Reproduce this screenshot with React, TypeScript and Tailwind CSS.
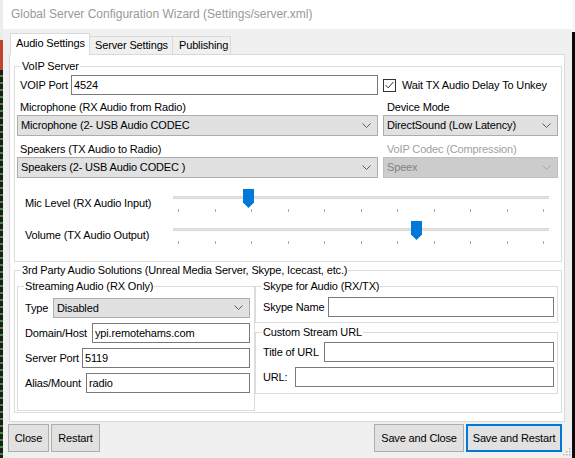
import React from "react";

function Chevron({ disabled = false }: { disabled?: boolean }) {
  return (
    <svg width="9" height="6" viewBox="0 0 9 6" className="shrink-0">
      <polyline
        points="0.5,0.5 4.5,4.5 8.5,0.5"
        fill="none"
        stroke={disabled ? "#a6a6a6" : "#5c5c5c"}
        strokeWidth="1"
      />
    </svg>
  );
}

function Select({
  value,
  className = "",
  disabled = false,
}: {
  value: string;
  className?: string;
  disabled?: boolean;
}) {
  const tone = disabled
    ? "border-[#bfbfbf] bg-[#cccccc] text-[#838383]"
    : "border-[#adadad] bg-[#e1e1e1] text-black";
  return (
    <div
      className={`flex items-center justify-between border pl-[3px] pr-[6px] whitespace-nowrap ${tone} ${className}`}
    >
      <span>{value}</span>
      <Chevron disabled={disabled} />
    </div>
  );
}

function Field({ value = "", className = "" }: { value?: string; className?: string }) {
  return (
    <input
      readOnly
      value={value}
      className={`h-[20px] border border-[#7a7a7a] bg-white px-[2px] text-[11px] tracking-[-0.15px] text-black outline-none ${className}`}
    />
  );
}

function Group({
  title,
  className = "",
  children,
}: {
  title: string;
  className?: string;
  children: React.ReactNode;
}) {
  return (
    <fieldset className={`border border-[#dcdcdc] ${className}`}>
      <legend className="ml-[6px] px-[1px] leading-[13px] whitespace-nowrap">{title}</legend>
      {children}
    </fieldset>
  );
}

// trackbar with 11 ticks, thumb placed by pixel offset
function Slider({ label, thumbLeft }: { label: string; thumbLeft: number }) {
  return (
    <div className="flex">
      <div className="flex h-[24px] w-[158px] items-center pl-[10px] pt-[4px] whitespace-nowrap">
        {label}
      </div>
      <div className="relative h-[24px] w-[376px]">
        <div className="mt-[7px] h-[3px] border-y border-[#d6d6d6] bg-[#e7eaea]" />
        <div className="mt-[10px] flex justify-between px-[5px]">
          {Array.from({ length: 11 }).map((_, i) => (
            <div key={i} className="h-[3px] w-px bg-[#a8a8a8]" />
          ))}
        </div>
        <svg
          width="11"
          height="19"
          viewBox="0 0 11 19"
          className="absolute top-0"
          style={{ left: thumbLeft }}
        >
          <path d="M0 0 H11 V13.5 L5.5 19 L0 13.5 Z" fill="#0078d7" />
        </svg>
      </div>
    </div>
  );
}

function Button({ label, className = "" }: { label: string; className?: string }) {
  return (
    <div
      className={`flex h-[28px] items-center justify-center bg-[#e1e1e1] whitespace-nowrap ${className}`}
    >
      {label}
    </div>
  );
}

export default function App() {
  return (
    <div className="flex h-[458px] w-[575px] overflow-hidden bg-[#f0f0f0] font-['Liberation_Sans',Arial,sans-serif] text-[11px] leading-[13px] tracking-[-0.15px] text-black">
      {/* desktop edge on the left */}
      <div className="flex w-[3px] flex-col">
        <div className="h-[40px] bg-[#ececec]" />
        <div className="h-[30px] bg-[#c0442c]" />
        <div className="flex-1 bg-[repeating-linear-gradient(180deg,#1c1c1c_0px,#1c1c1c_5px,#3f8a3a_5px,#3f8a3a_7px)]" />
      </div>

      {/* window */}
      <div className="relative flex w-[569px] flex-col">
        <div className="flex h-[29px] items-center bg-white pl-[8px] text-[12px] tracking-normal text-[#999999]">
          Global Server Configuration Wizard (Settings/server.xml)
        </div>

        <div className="flex flex-1 flex-col bg-[#f0f0f0] pl-[6px]">
          {/* tabs */}
          <div className="ml-[1px] mt-[4px] flex items-end whitespace-nowrap">
            <div className="relative z-10 -mb-px flex h-[22px] w-[80px] items-center border-x border-t border-[#d9d9d9] bg-white pb-[2px] pl-[5px]">
              Audio Settings
            </div>
            <div className="flex h-[18px] w-[83px] items-center border-r border-t border-[#d9d9d9] bg-[#f0f0f0] pl-[5px]">
              Server Settings
            </div>
            <div className="flex h-[18px] w-[58px] items-center border-r border-t border-[#d9d9d9] bg-[#f0f0f0] pl-[6px]">
              Publishing
            </div>
          </div>

          {/* tab page */}
          <div className="h-[368px] w-[556px] border border-[#d9d9d9] bg-white">
            <Group title="VoIP Server" className="ml-[4px] mt-[5px] w-[548px] pb-[16px]">
              <div className="mt-[2px] flex items-center">
                <span className="ml-[5px] w-[51px]">VOIP Port</span>
                <Field value="4524" className="w-[307px]" />
                <div className="ml-[5px] flex h-[13px] w-[13px] items-center justify-center border border-[#333333] bg-white">
                  <svg width="9" height="8" viewBox="0 0 9 8">
                    <polyline points="0.5,4 3.2,6.8 8.5,0.8" fill="none" stroke="#333333" strokeWidth="1" />
                  </svg>
                </div>
                <span className="ml-[6px] whitespace-nowrap">Wait TX Audio Delay To Unkey</span>
              </div>

              <div className="mt-[6px] flex">
                <div className="ml-[2px] w-[361px]">
                  <div className="h-[13px] pl-[3px]">Microphone (RX Audio from Radio)</div>
                  <Select value="Microphone (2- USB Audio CODEC" className="mt-[1px] h-[21px]" />
                </div>
                <div className="ml-[5px] w-[175px]">
                  <div className="h-[13px] pl-[4px]">Device Mode</div>
                  <Select value="DirectSound (Low Latency)" className="mt-[1px] h-[21px]" />
                </div>
              </div>

              <div className="mt-[7px] flex">
                <div className="ml-[2px] w-[361px]">
                  <div className="h-[13px] pl-[3px]">Speakers (TX Audio to Radio)</div>
                  <Select value="Speakers (2- USB Audio CODEC )" className="mt-[1px] h-[21px]" />
                </div>
                <div className="ml-[5px] w-[175px]">
                  <div className="h-[13px] pl-[4px] text-[#a0a0a0]">VoIP Codec (Compression)</div>
                  <Select value="Speex" disabled className="mt-[1px] h-[21px]" />
                </div>
              </div>

              <div className="mt-[11px]">
                <Slider label="Mic Level (RX Audio Input)" thumbLeft={70} />
              </div>
              <div className="mt-[8px]">
                <Slider label="Volume (TX Audio Output)" thumbLeft={238} />
              </div>
            </Group>

            <Group
              title="3rd Party Audio Solutions (Unreal Media Server, Skype, Icecast, etc.)"
              className="ml-[4px] mt-[2px] w-[548px] pb-[1px]"
            >
              <div className="flex">
                <Group title="Streaming Audio (RX Only)" className="ml-[2px] mt-[3px] w-[238px] pb-[17px]">
                  <div className="mt-[5px] flex items-center">
                    <span className="ml-[7px] w-[28px]">Type</span>
                    <Select value="Disabled" className="h-[20px] w-[197px]" />
                  </div>
                  <div className="mt-[5px] flex items-center">
                    <span className="ml-[7px] w-[67px] whitespace-nowrap">Domain/Host</span>
                    <Field value="ypi.remotehams.com" className="w-[158px]" />
                  </div>
                  <div className="mt-[5px] flex items-center">
                    <span className="ml-[7px] w-[57px] whitespace-nowrap">Server Port</span>
                    <Field value="5119" className="w-[168px]" />
                  </div>
                  <div className="mt-[5px] flex items-center">
                    <span className="ml-[7px] w-[61px] whitespace-nowrap">Alias/Mount</span>
                    <Field value="radio" className="w-[164px]" />
                  </div>
                </Group>

                <div className="flex w-[303px] flex-col">
                  <Group title="Skype for Audio (RX/TX)" className="mt-[3px] w-[303px] pb-[5px]">
                    <div className="mt-[4px] flex items-center">
                      <span className="ml-[7px] w-[65px] whitespace-nowrap">Skype Name</span>
                      <Field className="w-[226px]" />
                    </div>
                  </Group>
                  <Group title="Custom Stream URL" className="mt-[3px] w-[303px] pb-[6px]">
                    <div className="mt-[3px] flex items-center">
                      <span className="ml-[7px] w-[61px] whitespace-nowrap">Title of URL</span>
                      <Field className="w-[230px]" />
                    </div>
                    <div className="mt-[5px] flex items-center">
                      <span className="ml-[7px] w-[32px]">URL:</span>
                      <Field className="w-[259px]" />
                    </div>
                  </Group>
                </div>
              </div>
            </Group>
          </div>

          {/* buttons */}
          <div className="-ml-px mt-[2px] flex w-[554px]">
            <Button label="Close" className="w-[41px] border border-[#adadad]" />
            <Button label="Restart" className="ml-[2px] w-[49px] border border-[#adadad]" />
            <div className="flex-1" />
            <Button label="Save and Close" className="w-[90px] border border-[#adadad]" />
            <Button label="Save and Restart" className="ml-[2px] w-[96px] border-2 border-[#0078d7]" />
          </div>
        </div>

        {/* size grip */}
        <svg width="10" height="10" viewBox="0 0 10 10" className="absolute bottom-[2px] right-[1px]">
          {[
            [8, 2],
            [5, 5],
            [8, 5],
            [2, 8],
            [5, 8],
            [8, 8],
          ].map(([x, y], i) => (
            <rect key={i} x={x} y={y} width="1.5" height="1.5" fill="#b8b8b8" />
          ))}
        </svg>
      </div>

      {/* desktop edge on the right */}
      <div className="flex w-[3px] flex-col">
        <div className="h-[32px] bg-[#f7f7f7]" />
        <div className="flex-1 bg-[#0a0a0a]" />
      </div>
    </div>
  );
}
